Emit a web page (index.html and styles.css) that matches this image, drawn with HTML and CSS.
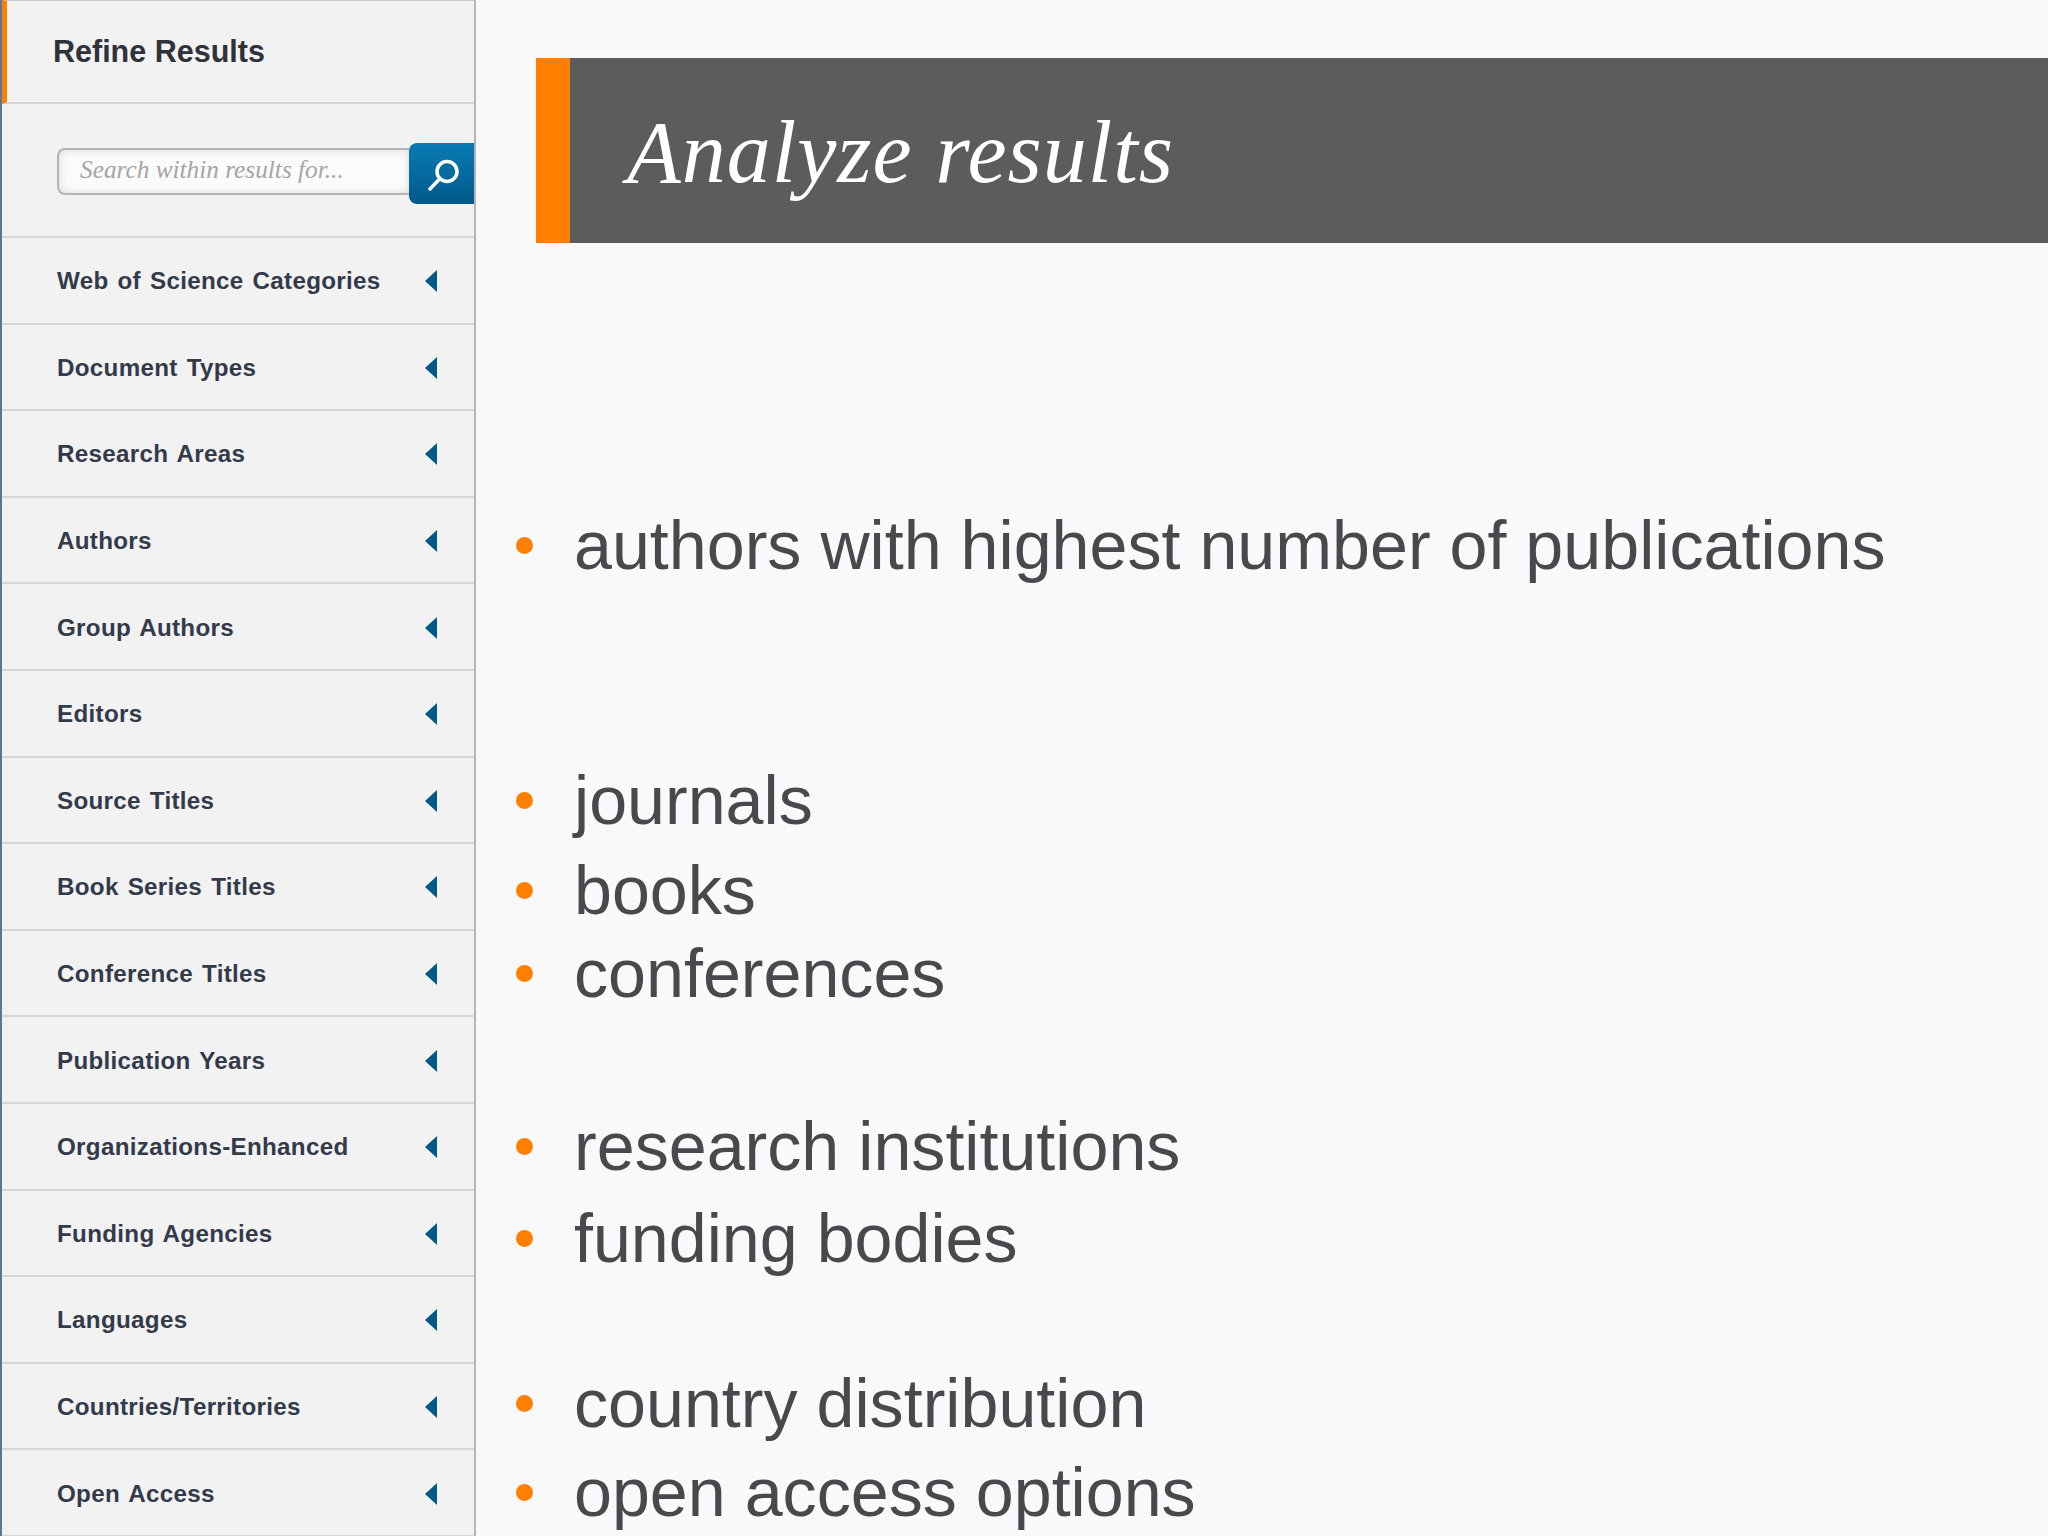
FILE: index.html
```html
<!DOCTYPE html>
<html lang="en">
<head>
<meta charset="utf-8">
<title>Analyze results</title>
<link rel="stylesheet" href="styles.css">
</head>
<body>
<div class="page">
  <aside class="sidebar">
    <div class="refine"><h2>Refine Results</h2></div>
    <div class="search">
      <div class="search-input">Search within results for...</div>
      <div class="search-btn">
        <svg width="34" height="34" viewBox="0 0 34 34"><circle cx="22" cy="14.5" r="10" fill="none" stroke="#fff" stroke-width="3.5"/><path d="M15 21.5L5 32" stroke="#fff" stroke-width="3.5" stroke-linecap="round"/></svg>
      </div>
    </div>
    <ul class="facets">
      <li>Web of Science Categories<i class="tri"></i></li>
      <li>Document Types<i class="tri"></i></li>
      <li>Research Areas<i class="tri"></i></li>
      <li>Authors<i class="tri"></i></li>
      <li>Group Authors<i class="tri"></i></li>
      <li>Editors<i class="tri"></i></li>
      <li>Source Titles<i class="tri"></i></li>
      <li>Book Series Titles<i class="tri"></i></li>
      <li>Conference Titles<i class="tri"></i></li>
      <li>Publication Years<i class="tri"></i></li>
      <li>Organizations-Enhanced<i class="tri"></i></li>
      <li>Funding Agencies<i class="tri"></i></li>
      <li>Languages<i class="tri"></i></li>
      <li>Countries/Territories<i class="tri"></i></li>
      <li>Open Access<i class="tri"></i></li>
    </ul>
  </aside>
  <main class="slide">
    <header class="banner"><h1>Analyze results</h1></header>
    <ul class="points first"><li>authors with highest number of publications</li></ul>
    <ul class="points second"><li>journals</li><li>books</li><li>conferences</li></ul>
    <ul class="points third"><li>research institutions</li><li>funding bodies</li></ul>
    <ul class="points fourth"><li>country distribution</li><li>open access options</li></ul>
  </main>
</div>
</body>
</html>
```
FILE: styles.css
```css
* { box-sizing: border-box; }
html, body { margin: 0; padding: 0; background: #f9f9fb; }
.page { display: flex; width: 2048px; height: 1536px; overflow: hidden; }

.sidebar {
  width: 476px;
  flex: none;
  display: flex;
  flex-direction: column;
  background: #f2f2f3;
  border-left: 2px solid #5f7596;
  border-right: 2px solid #b5b5b7;
  font-family: "Liberation Sans", Arial, sans-serif;
}
.refine {
  height: 104px;
  flex: none;
  display: flex;
  align-items: center;
  padding-left: 46px;
  border-top: 1px solid #c9c9cb;
  border-left: 5px solid #ff8000;
  border-bottom: 2px solid #d4d4d6;
}
.refine h2 { margin: 0; font-size: 30.5px; font-weight: bold; color: #2f3238; }
.search {
  height: 134px;
  flex: none;
  display: flex;
  align-items: flex-start;
  padding: 39px 0 0 55px;
  border-bottom: 2px solid #d8d8da;
}
.search-input {
  width: 353px;
  height: 47px;
  margin-top: 5px;
  padding: 0 0 5px 21px;
  display: flex;
  align-items: center;
  border: 2px solid #b4b4b6;
  border-right: 0;
  border-radius: 8px 0 0 8px;
  background: #fbfbfb;
  box-shadow: inset 0 0 8px #d8d8d8;
  font-family: "Liberation Serif", serif;
  font-style: italic;
  font-size: 25.3px;
  color: #a5a5a7;
}
.search-btn {
  width: 65px;
  height: 61px;
  display: flex;
  align-items: center;
  justify-content: center;
  border-radius: 8px 0 0 8px;
  background: linear-gradient(#0a7cb4, #00598a);
}
.facets { list-style: none; margin: 0; padding: 0; display: grid; grid-auto-rows: 86.6px; }
.facets li {
  display: flex;
  align-items: center;
  justify-content: space-between;
  padding: 2px 37px 0 55px;
  border-bottom: 2px solid #d6d6d8;
  font-size: 24.2px;
  font-weight: bold;
  letter-spacing: 0.3px;
  word-spacing: 2px;
  color: #333a4a;
}
.tri {
  width: 0;
  height: 0;
  border-style: solid;
  border-width: 11px 12px 11px 0;
  border-color: transparent #005a87 transparent transparent;
}

.slide { flex: 1; min-width: 0; padding-left: 60px; }
.banner {
  height: 185px;
  margin-top: 58px;
  display: flex;
  align-items: center;
  padding: 3px 0 0 57px;
  background: #5c5c5c;
  border-left: 34px solid #ff8000;
}
.banner h1 {
  margin: 0;
  font-family: "Liberation Serif", serif;
  font-style: italic;
  font-weight: normal;
  font-size: 88px;
  letter-spacing: 1px;
  color: #fff;
}
.points {
  list-style: none;
  margin: 0;
  padding: 0 0 0 38px;
  font-family: "Liberation Sans", Arial, sans-serif;
  font-size: 68.2px;
  line-height: 88px;
  color: #4a484c;
}
.points li { position: relative; white-space: nowrap; }
.points li::before {
  content: "";
  position: absolute;
  left: -58px;
  top: 36px;
  width: 17px;
  height: 17px;
  border-radius: 50%;
  background: #ff8000;
}
.first { margin-top: 258px; }
.second { margin-top: 167px; }
.second li:nth-child(2) { margin-top: 2px; }
.second li:nth-child(3) { margin-top: -5px; }
.third { margin-top: 85px; }
.third li + li { margin-top: 4px; }
.fourth { margin-top: 77px; }
.fourth li + li { margin-top: 1px; }
```
